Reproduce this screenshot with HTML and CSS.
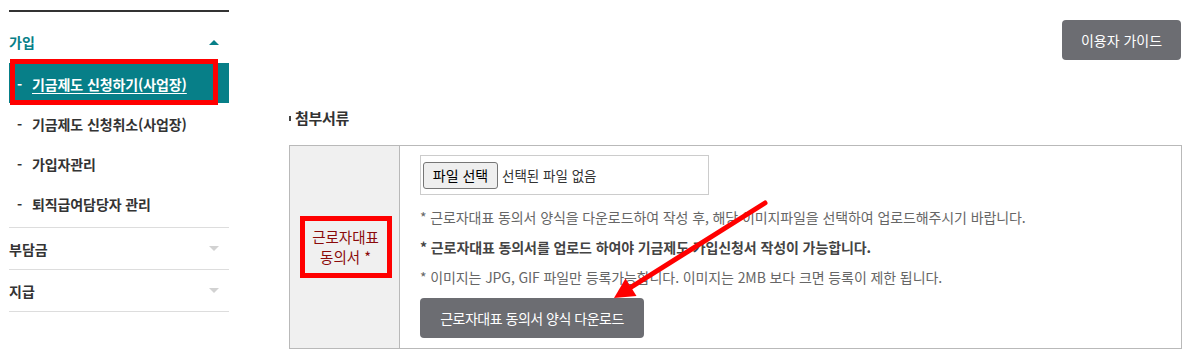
FILE: index.html
```html
<!DOCTYPE html>
<html lang="ko">
<head>
<meta charset="utf-8">
<title>기금제도 신청하기</title>
<link rel="stylesheet" href="styles.css">
</head>
<body>
<div class="page">
  <nav class="sidebar">
    <div class="group">
      <div class="group-head first"><span>가입</span><i class="caret up"></i></div>
      <ul class="sub">
        <li class="active"><span class="dash">-</span><a class="link">기금제도 신청하기(사업장)</a><span class="mark"></span></li>
        <li><span class="dash">-</span><a class="link">기금제도 신청취소(사업장)</a></li>
        <li><span class="dash">-</span><a class="link">가입자관리</a></li>
        <li><span class="dash">-</span><a class="link">퇴직급여담당자 관리</a></li>
      </ul>
    </div>
    <div class="group">
      <div class="group-head"><span>부담금</span><i class="caret down"></i></div>
    </div>
    <div class="group">
      <div class="group-head"><span>지급</span><i class="caret down"></i></div>
    </div>
  </nav>

  <main class="main">
    <div class="toolbar">
      <button class="btn guide">이용자 가이드</button>
    </div>
    <h3 class="section-title">첨부서류</h3>
    <div class="attach">
      <div class="attach-th"><span class="hl">근로자대표<br>동의서 *</span></div>
      <div class="attach-td">
        <div class="file-box"><span class="file-btn">파일 선택</span><span class="file-name">선택된 파일 없음</span></div>
        <p class="note">* 근로자대표 동의서 양식을 다운로드하여 작성 후, 해당 이미지파일을 선택하여 업로드해주시기 바랍니다.</p>
        <p class="note strong">* 근로자대표 동의서를 업로드 하여야 기금제도 가입신청서 작성이 가능합니다.</p>
        <p class="note">* 이미지는 JPG, GIF 파일만 등록가능합니다. 이미지는 2MB 보다 크면 등록이 제한 됩니다.</p>
        <button class="btn download">근로자대표 동의서 양식 다운로드</button>
      </div>
    </div>
  </main>

  <svg class="arrow" viewBox="0 0 1191 355" width="1191" height="355" aria-hidden="true">
    <line x1="765" y1="203" x2="629" y2="288.5" stroke="#ff0000" stroke-width="5" stroke-linecap="round"/>
    <polygon points="614,298 636.5,296 625.5,278.5" fill="#ff0000"/>
  </svg>
</div>
</body>
</html>
```

FILE: styles.css
```css
* {
  box-sizing: border-box;
}

html, body {
  margin: 0;
  padding: 0;
  background: #ffffff;
}

body {
  font-family: "Noto Sans CJK KR", "Noto Sans", sans-serif;
  color: #333333;
}

.page {
  position: relative;
  width: 1191px;
  height: 355px;
  display: flex;
  padding-left: 9px;
  gap: 60px;
  overflow: hidden;
}

/* ---------- Sidebar ---------- */
.sidebar {
  width: 220px;
  flex: none;
  margin-top: 10px;
  border-top: 2px solid #333333;
  align-self: flex-start;
}

.group {
  border-bottom: 1px solid #dddddd;
}

.group-head {
  height: 41px;
  display: flex;
  align-items: center;
  justify-content: space-between;
  padding-right: 10px;
  font-size: 14px;
  font-weight: 700;
  letter-spacing: 0;
  line-height: 20px;
  color: #333333;
}

.group-head.first {
  height: 51px;
  padding-top: 9px;
  color: #077f88;
}

.caret {
  display: block;
  width: 0;
  height: 0;
  border-left: 5px solid transparent;
  border-right: 5px solid transparent;
}

.caret.up {
  border-bottom: 5px solid #077f88;
}

.caret.down {
  border-top: 5px solid #d2d2d2;
}

.sub {
  list-style: none;
  margin: 0;
  padding: 0 0 4px 0;
}

.sub li {
  position: relative;
  height: 40px;
  display: flex;
  align-items: center;
  padding-left: 8px;
  padding-top: 1px;
  font-size: 14px;
  font-weight: 700;
  letter-spacing: -0.1px;
  color: #333333;
}

.dash {
  display: inline-block;
  width: 15px;
}

.sub li.active {
  background: #077f88;
  color: #ffffff;
}

.sub li.active .link {
  text-decoration: underline;
  text-underline-offset: 3px;
}

.mark {
  position: absolute;
  top: -4px;
  left: 1px;
  width: 208px;
  height: 46px;
  border: 5px solid #ff0000;
}

/* ---------- Main ---------- */
.main {
  width: 893px;
  flex: none;
  padding-top: 20px;
}

.toolbar {
  display: flex;
  justify-content: flex-end;
  padding-right: 1px;
}

.btn {
  border: 0;
  border-radius: 4px;
  background: #6c6d72;
  color: #ffffff;
  font-family: "Noto Sans CJK KR", "Noto Sans", sans-serif;
  cursor: pointer;
}

.guide {
  width: 119px;
  height: 40px;
  font-size: 14px;
  letter-spacing: 0;
}

.section-title {
  display: flex;
  align-items: center;
  gap: 4px;
  margin: 48px 0 17px 0;
  font-size: 15px;
  line-height: 20px;
  font-weight: 700;
  letter-spacing: -0.3px;
  color: #333333;
}

.section-title::before {
  content: "";
  display: block;
  width: 2px;
  height: 5px;
  background: #444444;
}

.attach {
  display: grid;
  grid-template-columns: 110px 1fr;
  border: 1px solid #b9b9b9;
}

.attach-th {
  background: #f0f0f0;
  border-right: 1px solid #b9b9b9;
  display: flex;
  align-items: center;
  justify-content: center;
  padding-left: 2px;
}

.hl {
  display: block;
  width: 92px;
  padding: 6px 0;
  border: 5px solid #ff0000;
  text-align: center;
  font-size: 14.5px;
  line-height: 20px;
  color: #8a0a0a;
}

.attach-td {
  padding: 9px 20px 10px 20px;
}

.file-box {
  width: 289px;
  height: 40px;
  border: 1px solid #cccccc;
  display: flex;
  align-items: center;
  padding-left: 2px;
}

.file-btn {
  display: flex;
  align-items: center;
  justify-content: center;
  width: 75px;
  height: 27px;
  background: #efefef;
  border: 1px solid #767676;
  border-radius: 3px;
  font-size: 14px;
  color: #000000;
}

.file-name {
  margin-left: 4px;
  font-size: 13.5px;
  color: #333333;
}

.note {
  margin: 0;
  font-size: 14px;
  line-height: 30px;
  color: #666666;
  letter-spacing: -0.1px;
}

.file-box + .note {
  margin-top: 7px;
}

.note.strong {
  font-weight: 700;
  color: #444444;
}

.download {
  display: block;
  margin-top: 6px;
  width: 224px;
  height: 40px;
  font-size: 14px;
  letter-spacing: -0.5px;
}

/* annotation overlay */
.arrow {
  position: absolute;
  left: 0;
  top: 0;
  pointer-events: none;
}
```
